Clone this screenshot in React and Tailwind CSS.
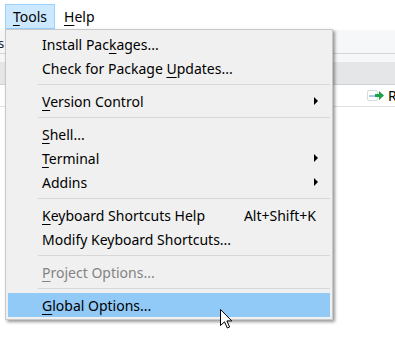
import React from 'react'

const FONT = { fontFamily: '"Noto Sans", "Open Sans", sans-serif' }

// ── menu data: [label, mnemonic index, extra] ─────────────────────────────────
const MENU = [
  { label: 'Install Packages...', u: 11 },
  { label: 'Check for Package Updates...', u: 18 },
  { sep: true },
  { label: 'Version Control', u: 0, sub: true },
  { sep: true },
  { label: 'Shell...', u: 0 },
  { label: 'Terminal', u: 0, sub: true },
  { label: 'Addins', u: -1, sub: true },
  { sep: true },
  { label: 'Keyboard Shortcuts Help', u: 0, key: 'Alt+Shift+K' },
  { label: 'Modify Keyboard Shortcuts...', u: -1 },
  { sep: true },
  { label: 'Project Options...', u: 0, disabled: true },
  { sep: true },
  { label: 'Global Options...', u: 0, active: true },
]

function Mnemonic({ text, u }) {
  if (u < 0) return text
  return (
    <>
      {text.slice(0, u)}
      <span className="underline underline-offset-[3px]">{text[u]}</span>
      {text.slice(u + 1)}
    </>
  )
}

function SubArrow() {
  return (
    <svg width="5" height="8" viewBox="0 0 5 8">
      <polygon points="0,0 4,4 0,8" fill="#000" />
    </svg>
  )
}

function Cursor() {
  return (
    <svg width="13" height="20" viewBox="0 0 13 20">
      <polygon
        points="0.5,0.5 0.5,16.5 4.5,12.8 7.3,19 9.6,18 6.9,11.9 11.8,11.9"
        fill="#fff" stroke="#000" strokeWidth="1" strokeLinejoin="miter" />
    </svg>
  )
}

function RunIcon() {
  return (
    <div className="flex items-center">
      <div className="w-[11px] h-[11px] border border-[#d5dbe2] bg-white rounded-[2px] flex items-center">
        <div className="w-[7px] h-[2px] bg-[#a9c8ee] ml-[1px]" />
      </div>
      <svg width="9" height="9" viewBox="0 0 9 9" className="-ml-[3px]">
        <polygon points="0,3 4,3 4,0 9,4.5 4,9 4,6 0,6" fill="#1aa34a" />
      </svg>
    </div>
  )
}

export default function App() {
  return (
    <div className="relative w-[395px] h-[343px] bg-white overflow-hidden text-[14px] text-black" style={FONT}>
      {/* menubar */}
      <div className="h-[30px] flex items-start pt-[4px] pl-[5px]">
        <div className="h-[25px] w-[50px] flex items-center justify-center bg-[#cce8ff] border border-[#99d1ff]">
          <span><span className="underline underline-offset-[3px]">T</span>ools</span>
        </div>
        <div className="h-[25px] pl-[9px] flex items-center">
          <span><span className="underline underline-offset-[3px]">H</span>elp</span>
        </div>
      </div>

      {/* window content behind the menu */}
      <div className="h-[23px] bg-[#f5f7f9] flex items-center pt-[4px]">
        <span className="-ml-[2px] text-[13px] text-[#1a1a2e]">s</span>
      </div>
      <div className="h-px bg-[#d3d6d9]" />
      <div className="h-[8px] bg-[#f5f7f9]" />
      <div className="h-[22px] bg-[#e4e6e8]" />
      <div className="h-px bg-[#d0d3d6]" />
      <div className="h-[21px] bg-white flex items-center pl-[367px] gap-[4px]">
        <RunIcon />
        <span className="text-[14px]">R</span>
      </div>
      <div className="h-px bg-[#dfe2e5]" />

      {/* dropdown */}
      <div className="absolute left-[5px] top-[29px] w-[328px] bg-[#f0f0f0] border border-[#c8c8c8] p-[2px] shadow-[2px_2px_3px_rgba(0,0,0,0.4)]">
        {MENU.map((m, i) =>
          m.sep ? (
            <div key={i} className="h-[9px] flex items-center pl-[30px]">
              <div className="h-px w-full bg-[#d7d7d7]" />
            </div>
          ) : (
            <div
              key={i}
              className={
                'h-[24px] flex items-center pl-[34px] ' +
                (m.active ? 'bg-[#91c9f7] ' : '') +
                (m.disabled ? 'text-[#838383]' : 'text-black')
              }>
              <span className="flex-1 whitespace-nowrap"><Mnemonic text={m.label} u={m.u} /></span>
              {m.key && <span className="pr-[14px] whitespace-nowrap">{m.key}</span>}
              {m.sub && <span className="pr-[11px] flex items-center"><SubArrow /></span>}
            </div>
          )
        )}
      </div>

      {/* mouse pointer */}
      <div className="absolute left-[220px] top-[309px]">
        <Cursor />
      </div>
    </div>
  )
}
